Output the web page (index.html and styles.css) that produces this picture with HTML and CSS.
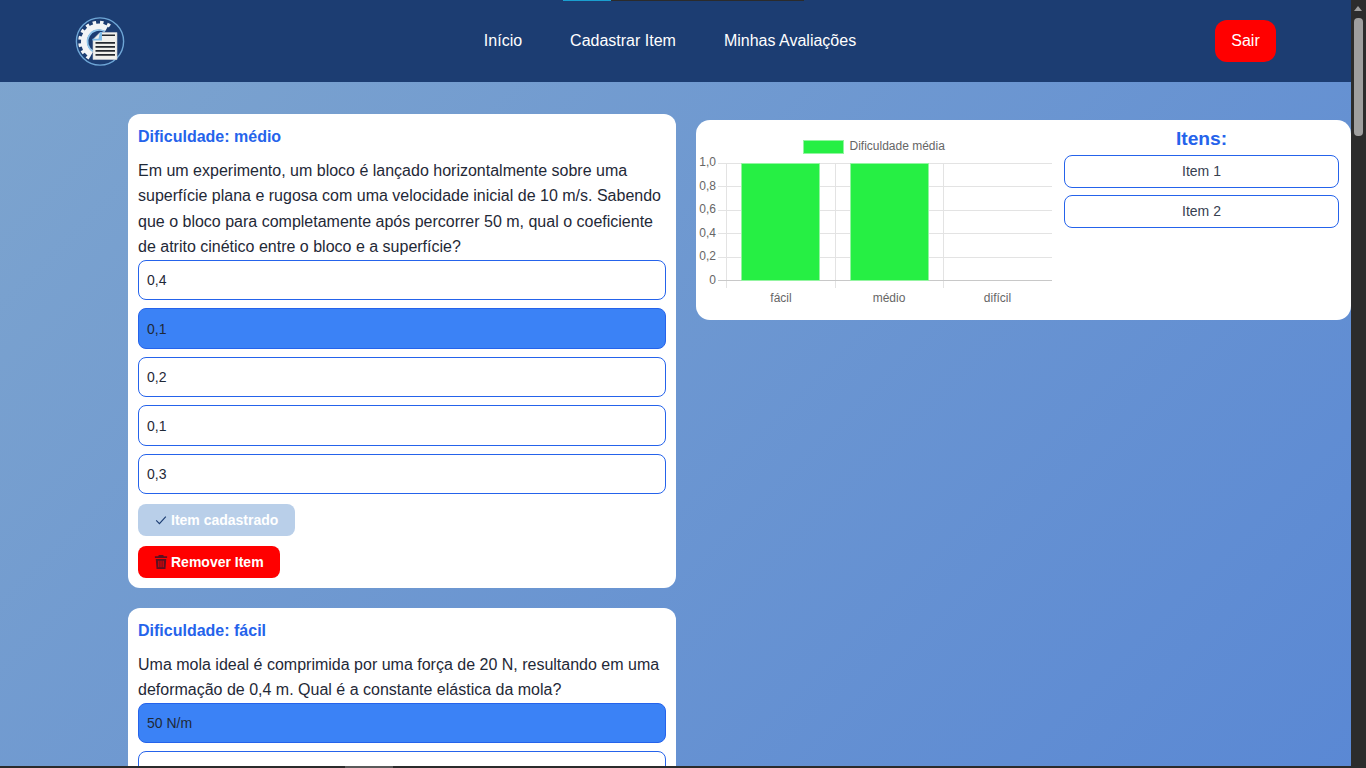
FILE: index.html
```html
<!DOCTYPE html>
<html lang="pt-BR">
	<head>
		<meta charset="UTF-8" />
		<meta name="viewport" content="width=device-width, initial-scale=1.0" />
		<title>Minhas Avaliações</title>
		<link rel="stylesheet" href="styles.css">
	</head>
	<body>
		<div class="page">
			<header class="topbar">
				<a class="logo" href="#">
					<svg width="50" height="50" viewBox="0 0 50 50">
						<circle cx="25" cy="24.500" r="23.600" fill="#1c3d72" stroke="#6ea6d6" stroke-width="1.400" />
						<!-- engrenagem -->
						<g fill="none" transform="rotate(120 24 24.500)">
							<circle cx="24" cy="24.500" r="15" stroke="#f2f4f6" stroke-width="6" stroke-dasharray="47 100" />
							<circle cx="24" cy="24.500" r="19" stroke="#f2f4f6" stroke-width="3.600" stroke-dasharray="3.400 3.800 3.400 3.800 3.400 3.800 3.400 3.800 3.400 3.800 3.400 3.800 3.400 3.800 3.400 3.800 3.400 100" />
							<circle cx="24" cy="24.500" r="11.500" stroke="#8ec4ea" stroke-width="1.600" stroke-dasharray="36 100" />
						</g>
						<!-- documento -->
						<path fill="#f0f0ec" stroke="#c9ced2" stroke-width=".6" d="M25 15.500H42V42.500H18V22.500z" />
						<path fill="#7fbce8" d="M25 15h2v8.500H17.500V21.800h6z" />
						<path fill="#24292f" d="M27 17.500H40V19H27zM20.500 25H40v1.700H20.500zM20.500 29H40v1.700H20.500zM20.500 33H40v1.700H20.500zM20.500 37H40v1.700H20.500z" />
					</svg>
				</a>
				<nav class="nav">
					<a href="#">Início</a>
					<a href="#">Cadastrar Item</a>
					<a href="#">Minhas Avaliações</a>
				</nav>
				<button class="sair">Sair</button>
			</header>

			<main class="content">
				<section class="col-items">
					<article class="card">
						<h3 class="dif">Dificuldade: médio</h3>
						<p class="enunciado">Em um experimento, um bloco é lançado horizontalmente sobre uma superfície plana e rugosa com uma velocidade inicial de 10 m/s. Sabendo que o bloco para completamente após percorrer 50 m, qual o coeficiente de atrito cinético entre o bloco e a superfície?</p>
						<div class="opcao">0,4</div>
						<div class="opcao certa">0,1</div>
						<div class="opcao">0,2</div>
						<div class="opcao">0,1</div>
						<div class="opcao">0,3</div>
						<button class="btn btn-ok">
							<svg class="ico" width="14" height="14" viewBox="0 0 16 16"><path fill="none" stroke="#1c3d72" stroke-width="1.300" d="M2.500 8.500l3.700 3.700 7.300-8" /></svg>
							Item cadastrado
						</button>
						<button class="btn btn-rem">
							<svg class="ico" width="14" height="14" viewBox="0 0 16 16"><path fill="#5c1020" d="M5.500 0h5l.7 1.500H15V3.500H1V1.500h3.800zM2 4.500h12l-.9 11.500H2.900zM5 6.500v7.500h1.100V6.500zM7.450 6.500v7.500h1.100V6.500zM9.900 6.500v7.500H11V6.500z" /></svg>
							Remover Item
						</button>
					</article>

					<article class="card">
						<h3 class="dif">Dificuldade: fácil</h3>
						<p class="enunciado">Uma mola ideal é comprimida por uma força de 20 N, resultando em uma deformação de 0,4 m. Qual é a constante elástica da mola?</p>
						<div class="opcao certa">50 N/m</div>
						<div class="opcao"></div>
					</article>
				</section>

				<aside class="painel">
					<svg class="grafico" width="356" height="200" viewBox="0 0 356 200">
						<rect x="107.500" y="20.500" width="40" height="13" fill="#26ef44" stroke="#93f5a1" />
						<text class="leg" x="153.500" y="30">Dificuldade média</text>

						<g stroke="#e3e3e3">
							<path d="M22 43.500H356M22 66.500H356M22 90.500H356M22 113.500H356M22 137.500H356" />
							<path d="M30.500 43V168M139.500 43V168M247.500 43V168" />
						</g>
						<path stroke="#c8c8c8" d="M22 160.500H356" />

						<rect x="45.500" y="43.500" width="78" height="117" fill="#26ef44" stroke="#93f5a1" />
						<rect x="154.500" y="43.500" width="78" height="117" fill="#26ef44" stroke="#93f5a1" />

						<g class="eixo-y">
							<text x="20" y="46">1,0</text>
							<text x="20" y="70">0,8</text>
							<text x="20" y="93">0,6</text>
							<text x="20" y="117">0,4</text>
							<text x="20" y="140">0,2</text>
							<text x="20" y="164">0</text>
						</g>
						<g class="eixo-x">
							<text x="85" y="182">fácil</text>
							<text x="193" y="182">médio</text>
							<text x="301.500" y="182">difícil</text>
						</g>
					</svg>
					<div class="lista">
						<h2 class="lista-titulo">Itens:</h2>
						<button class="item">Item 1</button>
						<button class="item">Item 2</button>
					</div>
				</aside>
			</main>
		</div>

		<!-- restos do navegador que aparecem na captura -->
		<div class="faixa-topo"><span></span></div>
		<div class="barra-v"><i class="seta"></i><i class="thumb"></i></div>
		<div class="barra-h"><i></i></div>
	</body>
</html>
```

FILE: styles.css
```css
* {
	margin: 0;
	padding: 0;
	box-sizing: border-box;
}
html,
body {
	height: 768px;
	overflow: hidden;
}
body {
	font-family: "Liberation Sans", Arial, sans-serif;
	color: #1f2937;
}
.page {
	width: 1366px;
	height: 768px;
	overflow: hidden;
	background: linear-gradient(135deg, #7ea5ce 0%, #5a88d4 100%);
}

/* topo */
.topbar {
	height: 82px;
	background-color: #1c3d72;
	padding: 0 90px 0 75px;
	display: flex;
	align-items: center;
	justify-content: space-between;
}
.logo {
	display: block;
	width: 50px;
	height: 50px;
	margin-top: 1px;
}
.nav {
	display: flex;
	gap: 48px;
}
.nav a {
	color: #fff;
	text-decoration: none;
	font-size: 16px;
}
.sair {
	width: 61px;
	height: 42px;
	background-color: #f00;
	color: #fff;
	border: none;
	border-radius: 12px;
	font-family: inherit;
	font-size: 16px;
}

/* conteudo */
.content {
	display: flex;
	align-items: flex-start;
	padding: 32px 15px 0 128px;
	gap: 20px;
}
.col-items {
	width: 548px;
	flex-shrink: 0;
	display: flex;
	flex-direction: column;
	gap: 20px;
}
.card {
	background-color: #fff;
	border-radius: 12px;
	padding: 10px;
}
.dif {
	color: #2563eb;
	font-size: 16px;
	line-height: 25px;
	font-weight: bold;
	margin-bottom: 8.500px;
}
.enunciado {
	font-size: 16px;
	line-height: 25.600px;
	margin-bottom: -0.100px;
}
.opcao {
	height: 40.500px;
	margin-bottom: 8px;
	padding: 0 8px;
	display: flex;
	align-items: center;
	font-size: 14px;
	border: 1px solid #2563eb;
	border-radius: 8px;
	background-color: #fff;
}
.opcao.certa {
	background-color: #3b82f6;
}
.btn {
	display: flex;
	align-items: center;
	gap: 3px;
	height: 32px;
	padding: 0 16px;
	border: none;
	border-radius: 8px;
	font-family: inherit;
	font-size: 14px;
	font-weight: bold;
	color: #fff;
}
.btn-ok {
	background-color: #b9cfe9;
	margin: 10px 0;
	padding-right: 17px;
}
.btn-rem {
	background-color: #f00;
}

/* painel do grafico */
.painel {
	flex: 1;
	height: 200px;
	margin-top: 6px;
	background-color: #fff;
	border-radius: 14px;
	display: flex;
}
.grafico {
	display: block;
	flex-shrink: 0;
}
.grafico text {
	font-size: 12px;
	fill: #666;
}
.eixo-y text {
	text-anchor: end;
}
.eixo-x text {
	text-anchor: middle;
}
.lista {
	width: 275px;
	margin-left: 12px;
	padding-top: 7px;
}
.lista-titulo {
	color: #2563eb;
	font-size: 19.200px;
	line-height: 23px;
	font-weight: bold;
	text-align: center;
	margin-bottom: 5px;
}
.item {
	display: block;
	width: 100%;
	height: 33px;
	margin-bottom: 7px;
	padding-bottom: 2px;
	background-color: #fff;
	border: 1px solid #2563eb;
	border-radius: 8px;
	font-family: inherit;
	font-size: 14px;
	color: #374151;
}

/* barras da janela */
.faixa-topo {
	position: absolute;
	top: 0;
	left: 563px;
	width: 241px;
	height: 1px;
	background-color: #2b2b2b;
}
.faixa-topo span {
	display: block;
	width: 48px;
	height: 1px;
	background-color: #1a9fd0;
}
.barra-v {
	position: absolute;
	top: 0;
	right: 0;
	width: 15px;
	height: 768px;
	background-color: #2c2c2c;
}
.seta {
	position: absolute;
	top: 6px;
	left: 3px;
	border-left: 4.500px solid transparent;
	border-right: 4.500px solid transparent;
	border-bottom: 5px solid #9f9f9f;
}
.thumb {
	position: absolute;
	top: 18px;
	left: 3px;
	width: 9px;
	height: 118px;
	border-radius: 4px;
	background-color: #9f9f9f;
}
.barra-h {
	position: absolute;
	left: 0;
	bottom: 0;
	width: 1351px;
	height: 2px;
	background-color: #2b2b2b;
}
.barra-h i {
	display: block;
	width: 48px;
	height: 2px;
	margin-left: 345px;
	background-color: #5a5a5a;
}
```
